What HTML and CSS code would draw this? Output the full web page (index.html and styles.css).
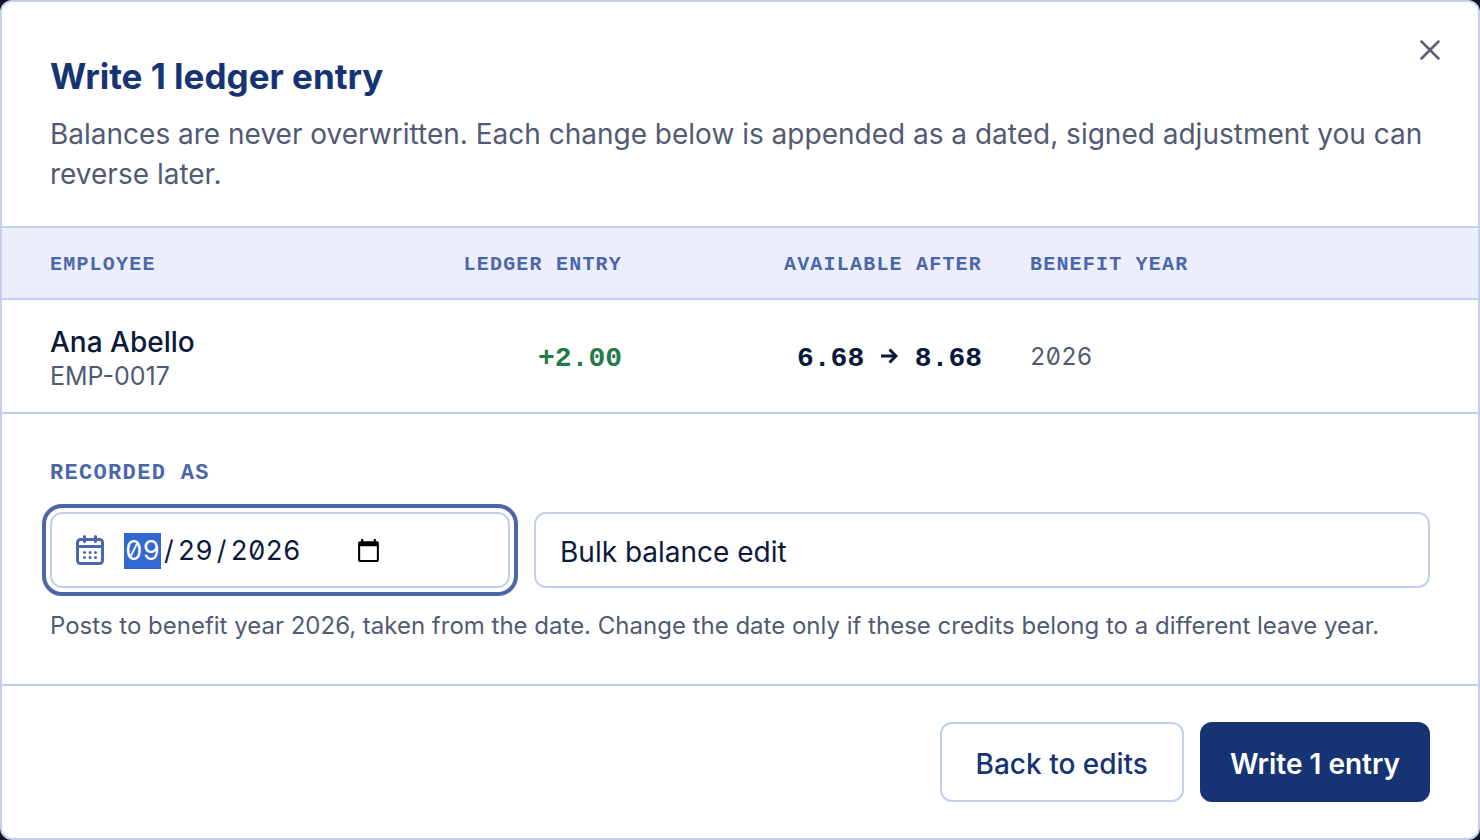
FILE: index.html
```html
<!DOCTYPE html>
<html lang="en">

<head>
    <meta charset="UTF-8">
    <meta name="viewport" content="width=device-width, initial-scale=1.0">
    <title>Write 1 ledger entry</title>

    <link rel="stylesheet" href="styles.css">
</head>

<body>

    <form class="dialog" role="dialog" aria-labelledby="dialogTitle">
        <button type="button" class="close" aria-label="Close">
            <svg viewBox="0 0 20 20" width="20" height="20"><path d="M1.500 1.500l17 17M18.500 1.500l-17 17" /></svg>
        </button>

        <header class="dialog-header">
            <h1 id="dialogTitle">Write 1 ledger entry</h1>
            <p>Balances are never overwritten. Each change below is appended as a dated, signed adjustment you can reverse later.</p>
        </header>

        <table class="entries">
            <thead>
                <tr>
                    <th class="col-employee">Employee</th>
                    <th class="col-number">Ledger entry</th>
                    <th class="col-number">Available after</th>
                    <th>Benefit year</th>
                </tr>
            </thead>
            <tbody>
                <tr>
                    <td>
                        <div class="name">Ana Abello</div>
                        <div class="emp-id">EMP-0017</div>
                    </td>
                    <td class="col-number change">+2.00</td>
                    <td class="col-number">6.68 <svg class="arrow" viewBox="0 0 17 18" width="17" height="18" role="img" aria-label="to"><path d="M0 8h15M8.500 1.500L15 8l-6.500 6.500" /></svg> 8.68</td>
                    <td class="year">2026</td>
                </tr>
            </tbody>
        </table>

        <section class="record">
            <label class="record-label" for="entryDate">Recorded as</label>
            <div class="fields">
                <div class="field date-field">
                    <svg class="calendar" viewBox="0 0 28 30" width="28" height="30">
                        <rect x="1.500" y="4.500" width="25" height="24" rx="3" />
                        <path d="M1.500 11.500h25M8.500 1.500v5M19.500 1.500v5" />
                        <path class="dots" d="M8.500 17.500h.01M14 17.500h.01M19.500 17.500h.01M8.500 22.500h.01M14 22.500h.01M19.500 22.500h.01" />
                    </svg>
                    <input type="date" id="entryDate" value="2026-09-29" autofocus>
                </div>
                <input type="text" class="field" id="entryNote" aria-label="Note" value="Bulk balance edit">
            </div>
            <p class="hint">Posts to benefit year 2026, taken from the date. Change the date only if these credits belong to a different leave year.</p>
        </section>

        <footer class="dialog-footer">
            <button type="button" class="btn">Back to edits</button>
            <button type="submit" class="btn btn-primary">Write 1 entry</button>
        </footer>
    </form>

    <script>
        // start on the month part of the date
        document.getElementById("entryDate").focus();
    </script>

</body>
</html>
```
FILE: styles.css
```css
* {
    box-sizing: border-box;
}

body {
    margin: 0;
    min-height: 100vh;
    background-color: #10122a;
    font-family: Inter, "Liberation Sans", sans-serif;
    color: #0b1a3c;
}

h1,
p {
    margin: 0;
}

.dialog {
    position: relative;
    display: flex;
    flex-direction: column;
    min-height: 100vh;
    background-color: #fff;
    border: 2px solid #c3d0ed;
    border-radius: 12px;
}

/* header */
.close {
    position: absolute;
    top: 32px;
    right: 32px;
    display: flex;
    padding: 6px;
    border: 0;
    background: none;
    cursor: pointer;
}

.close svg {
    fill: none;
    stroke: #556079;
    stroke-width: 2.5;
    stroke-linecap: round;
}

.dialog-header {
    padding: 48px 48px 32px;
}

h1 {
    margin-bottom: 12px;
    font-size: 35px;
    line-height: 52px;
    font-weight: 700;
    color: #163474;
}

.dialog-header p {
    font-size: 28px;
    line-height: 40px;
    color: #505b73;
}

/* table */
.entries {
    width: 100%;
    table-layout: fixed;
    border-collapse: collapse;
    text-align: left;
}

.entries th {
    height: 72px;
    padding: 2px 24px 0;
    background-color: #eceffb;
    border-top: 2px solid #c3d0ed;
    border-bottom: 2px solid #c3d0ed;
    font-family: "Liberation Mono", monospace;
    font-size: 20px;
    letter-spacing: 0.06em;
    text-transform: uppercase;
    color: #4b67ac;
}

.entries td {
    height: 114px;
    padding: 4px 24px 0;
    border-bottom: 2px solid #c3d0ed;
    font-size: 28px;
}

.entries .col-employee {
    width: 284px;
}

.entries th:first-child,
.entries td:first-child {
    padding-left: 48px;
}

.entries .col-number {
    width: 360px;
    text-align: right;
}

.entries td.col-number {
    font-family: "Liberation Mono", monospace;
    font-weight: 700;
}

.entries .change {
    color: #237a4b;
}

.arrow {
    fill: none;
    stroke: #0b1a3c;
    stroke-width: 3;
}

.name {
    font-size: 28px;
    line-height: 36px;
    font-weight: 500;
}

.emp-id {
    font-size: 25px;
    line-height: 32px;
    color: #505b73;
}

.entries .year {
    padding-top: 0;
    font-size: 24px;
    font-feature-settings: "tnum", "zero";
    color: #505b73;
}

/* recorded as */
.record {
    padding: 40px 48px;
}

.record-label {
    display: block;
    padding-top: 4px;
    margin-bottom: 22px;
    font-family: "Liberation Mono", monospace;
    font-size: 22px;
    line-height: 32px;
    font-weight: 700;
    letter-spacing: 0.06em;
    text-transform: uppercase;
    color: #4b67ac;
}

.fields {
    display: flex;
    gap: 24px;
}

.field {
    flex: 1;
    height: 76px;
    padding: 4px 24px 0;
    background-color: #fff;
    border: 2px solid #c3d0ed;
    border-radius: 12px;
    font-family: inherit;
    font-size: 28px;
    color: #0b1a3c;
}

.date-field {
    flex: 0 0 calc(100% / 3);
    display: flex;
    align-items: center;
    gap: 20px;
    padding-top: 0;
}

.date-field:focus-within {
    outline: 4px solid #4b67ac;
    outline-offset: 4px;
}

.calendar {
    fill: none;
    stroke: #4b67ac;
    stroke-width: 3;
    stroke-linecap: round;
}

.date-field input {
    width: 260px;
    padding: 2px 0 0;
    border: 0;
    outline: 0;
    background: none;
    font-family: inherit;
    font-size: 27px;
    line-height: 34px;
    font-feature-settings: "tnum", "zero";
    color: #0b1a3c;
}

.date-field input::-webkit-datetime-edit-month-field,
.date-field input::-webkit-datetime-edit-day-field,
.date-field input::-webkit-datetime-edit-year-field {
    padding: 2px 1px;
}

.date-field input::-webkit-datetime-edit-text {
    padding: 0 3px;
}

.date-field input::-webkit-datetime-edit-month-field:focus {
    background-color: #3067d3;
    color: #fff;
}

.hint {
    margin-top: 20px;
    font-size: 24px;
    line-height: 36px;
    color: #505b73;
}

/* footer */
.dialog-footer {
    display: flex;
    justify-content: flex-end;
    gap: 16px;
    padding: 36px 48px;
    border-top: 2px solid #c3d0ed;
}

.btn {
    height: 80px;
    padding: 4px 34px 0;
    border: 2px solid #c3d0ed;
    border-radius: 12px;
    background-color: #fff;
    font-family: inherit;
    font-size: 28px;
    font-weight: 500;
    color: #163474;
    cursor: pointer;
}

.btn-primary {
    padding: 4px 28px 0;
    border-color: #163474;
    background-color: #163474;
    font-weight: 600;
    color: #fff;
}
```
